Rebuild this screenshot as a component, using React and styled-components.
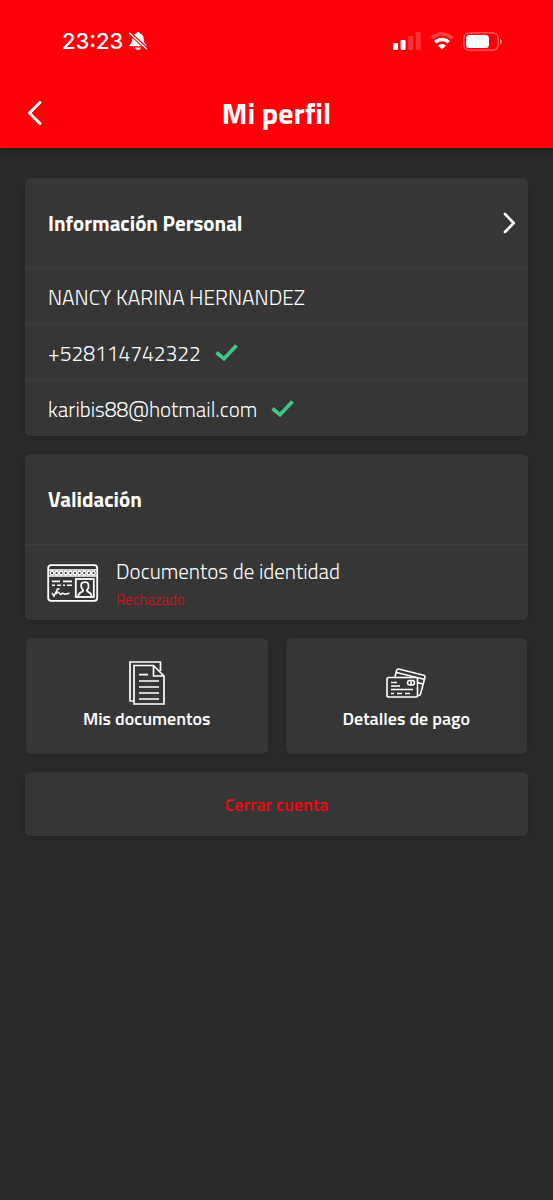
import React from 'react'
import styled, { createGlobalStyle } from 'styled-components'

const contactRows = [
  { id: 'name', text: 'NANCY KARINA HERNANDEZ', verified: false },
  { id: 'phone', text: '+528114742322', verified: true },
  { id: 'email', text: 'karibis88@hotmail.com', verified: true },
]

const BellOffIcon = () => (
  <svg width="20" height="20" viewBox="0 0 20 20" aria-hidden="true">
    <path fill="#fff" d="M10 1c1 0 1.700.6 1.900 1.500 2.400.8 3.700 2.700 3.800 5.300.1 3 .8 4.300 2.500 6 .6.700.3 1.400-.6 1.400H2.400c-.9 0-1.200-.7-.6-1.400 1.700-1.700 2.400-3 2.500-6 .1-2.600 1.400-4.500 3.800-5.300C8.300 1.600 9 1 10 1z" />
    <path fill="#fff" d="M7.200 16.500h5.600c-.2 1.600-1.300 2.500-2.800 2.500s-2.600-.9-2.800-2.500z" />
    <path stroke="#ff0008" strokeWidth="3.600" d="M1 1.500L19 18" />
    <path stroke="#fff" strokeWidth="1.400" strokeLinecap="round" d="M1.500 2L18.500 17.800" />
  </svg>
)

const SignalIcon = () => (
  <svg width="28" height="18" viewBox="0 0 28 18" fill="#fff" aria-hidden="true">
    <rect x="0" y="11" width="5" height="7" rx="1.300" />
    <rect x="7.600" y="8" width="5" height="10" rx="1.300" />
    <rect x="15.200" y="4" width="5" height="14" rx="1.300" opacity=".2" />
    <rect x="22.800" y="0" width="5" height="18" rx="1.300" opacity=".2" />
  </svg>
)

const WifiIcon = () => (
  <svg width="24" height="18" viewBox="0 0 24 18" fill="none" stroke="#fff" strokeWidth="3.400" aria-hidden="true">
    <path opacity=".25" d="M1.500 6.200C7.500.5 16.500.5 22.500 6.200" />
    <path d="M5.300 10.300C9.200 6.600 14.800 6.600 18.700 10.300" />
    <path fill="#fff" stroke="none" d="M12 17.500l-3.900-3.900c2.300-2 5.500-2 7.800 0z" />
  </svg>
)

const BatteryIcon = () => (
  <svg width="40" height="19" viewBox="0 0 40 19" aria-hidden="true">
    <rect x=".8" y=".8" width="34.500" height="17.400" rx="5.500" fill="none" stroke="#fff" strokeWidth="1.300" opacity=".4" />
    <rect x="3" y="3" width="23" height="13" rx="3.500" fill="#fff" />
    <path fill="#fff" opacity=".5" d="M37 6.500c2.300.8 2.300 5.200 0 6z" />
  </svg>
)

const BackIcon = () => (
  <svg width="16" height="26" viewBox="0 0 16 26" fill="none" stroke="#fff" strokeWidth="3" strokeLinecap="round" strokeLinejoin="round" aria-hidden="true">
    <path d="M13 2.500L2.500 13 13 23.500" />
  </svg>
)

const ForwardIcon = () => (
  <svg width="14" height="22" viewBox="0 0 14 22" fill="none" stroke="#fff" strokeWidth="2.700" strokeLinecap="round" strokeLinejoin="round" aria-hidden="true">
    <path d="M3 2l8.700 9L3 20" />
  </svg>
)

const CheckIcon = () => (
  <svg width="23" height="18" viewBox="0 0 23 18" fill="none" stroke="#41c983" strokeWidth="3.600" role="img" aria-label="Verificado">
    <path d="M1.500 8.500L9 14.800 21.500 1.500" />
  </svg>
)

const IdCardIcon = () => (
  <svg width="52" height="38" viewBox="0 0 52 38" fill="none" stroke="#fff" strokeWidth="1.800" aria-hidden="true">
    <rect x="1.200" y="1.200" width="49" height="35.600" rx="3" />
    <path d="M1.200 6h49M1.200 12h49" strokeWidth="1.300" />
    {[5, 9.600, 14.200, 18.800, 23.400, 28, 32.600, 37.200, 41.800, 46.400].map(cx => (
      <ellipse key={cx} cx={cx} cy="9" rx="1.800" ry="1.800" strokeWidth="1.400" />
    ))}
    <path d="M5 17.300h8M16 17.300h9" />
    <path d="M5 21.300h3M10 21.300h4M16 21.300h2M20 21.300h5" strokeWidth="1.600" />
    <path d="M5 29l2 3 3.500-7h2M9 30c2-3 3-2 4 0s2-2 3.500-.5 2.500.5 6-.3" strokeWidth="1.500" />
    <rect x="28.800" y="15" width="18" height="18" />
    <path d="M31 32.500c.4-2.600 1.500-3.700 3-4.200 1.700-.5 2.200-1 2.200-2-3-2.600-2.700-8 .3-8 3.500-1 5.800 1 5 5-.2 1.500-1 2.200-1.700 3 0 1 .8 1.500 2.200 2 1.500.6 2.300 1.900 2.700 4.200" strokeWidth="1.800" />
  </svg>
)

const DocumentsIcon = () => (
  <svg width="36" height="44" viewBox="0 0 36 44" fill="none" stroke="#fff" strokeWidth="1.700" aria-hidden="true">
    <path d="M4.500 40H1V1h30.500v9" />
    <path d="M5 4.500h19.500L35 15v28H5zM24.500 4.500V15H35" />
    <path d="M10 13.700h9M10 20h20M10 26h20M10 32h20M10 38h20" />
  </svg>
)

const CardsIcon = () => (
  <svg width="40" height="30" viewBox="0 0 40 30" fill="none" stroke="#fff" strokeWidth="1.600" strokeLinejoin="round" aria-hidden="true">
    <rect x="1" y="9.500" width="30.500" height="19.500" rx="1.800" />
    <path d="M9 9l1.700-7q.5-1.300 2-1L37.700 7.300q1.600.5 1.300 2L34.500 26q-.5 2-3 1.800M10.500 4.500L38 11.300M31.500 14.500l5.200 1.500" />
    <path d="M5 14.500h6M5 18h9M5 21.500h22M5 25.500h3M11 25.500h5M19 25.500h5" />
    <rect x="21.500" y="12.500" width="7" height="4.500" rx="2.200" />
    <path d="M25 12.500V17" />
  </svg>
)

const App = () => {
  return (
    <>
      <GlobalStyle />
      <Header>
        <StatusBar>
          <Clock>
            23:23
            <BellOffIcon />
          </Clock>
          <StatusIcons>
            <SignalIcon />
            <WifiIcon />
            <BatteryIcon />
          </StatusIcons>
        </StatusBar>
        <TitleBar>
          <BackButton type="button" aria-label="Volver">
            <BackIcon />
          </BackButton>
          <Title>Mi perfil</Title>
        </TitleBar>
      </Header>

      <Content>
        <Card>
          <CardHeader>
            <CardTitle>Información Personal</CardTitle>
            <ForwardButton type="button" aria-label="Editar información personal">
              <ForwardIcon />
            </ForwardButton>
          </CardHeader>
          {contactRows.map(row => (
            <InfoRow key={row.id}>
              {row.text}
              {row.verified && <CheckIcon />}
            </InfoRow>
          ))}
        </Card>

        <Card>
          <CardHeader>
            <CardTitle>Validación</CardTitle>
          </CardHeader>
          <DocumentRow type="button">
            <IdCardIcon />
            <DocumentText>
              <DocumentName>Documentos de identidad</DocumentName>
              <DocumentStatus>Rechazado</DocumentStatus>
            </DocumentText>
          </DocumentRow>
        </Card>

        <Tiles>
          <Tile type="button">
            <TileIcon>
              <DocumentsIcon />
            </TileIcon>
            Mis documentos
          </Tile>
          <Tile type="button">
            <TileIcon>
              <CardsIcon />
            </TileIcon>
            Detalles de pago
          </Tile>
        </Tiles>

        <CloseButton type="button">Cerrar cuenta</CloseButton>
      </Content>
    </>
  )
}

export default App

const GlobalStyle = createGlobalStyle`
    * {
        box-sizing: border-box;
    }

    body {
        margin: 0;
        background-color: #2b2b2b;
        color: #fff;
        font-family: "Titillium Web", Roboto, "Open Sans", sans-serif;
    }

    button {
        border: none;
        padding: 0;
        color: inherit;
        font-family: inherit;
        cursor: pointer;
    }

    svg {
        flex-shrink: 0;
    }
`

const Header = styled.header`
    background-color: #ff0008;
    box-shadow: 0 2px 6px rgba(0, 0, 0, 0.4);
`

const StatusBar = styled.div`
    display: flex;
    align-items: center;
    justify-content: space-between;
    height: 82px;
    padding: 0 50px 0 62px;
`

const Clock = styled.div`
    display: flex;
    align-items: center;
    gap: 5px;
    font-family: Inter, sans-serif;
    font-size: 22px;
    font-weight: 500;
`

const StatusIcons = styled.div`
    display: flex;
    align-items: center;
    gap: 9px;
`

const TitleBar = styled.div`
    display: grid;
    grid-template-columns: 28px 1fr 28px;
    align-items: center;
    height: 66px;
    padding: 0 21px 4px;
`

const BackButton = styled.button`
    display: flex;
    justify-content: center;
    background: none;
`

const Title = styled.h1`
    margin: 0;
    font-size: 30px;
    font-weight: 700;
    line-height: 40px;
    text-align: center;
`

const Content = styled.main`
    display: flex;
    flex-direction: column;
    gap: 18px;
    padding: 30px 25px;
`

const Card = styled.section`
    border-radius: 6px;
    background-color: #363636;
    box-shadow: 0 2px 8px rgba(0, 0, 0, 0.15);
`

const CardHeader = styled.div`
    display: flex;
    align-items: center;
    justify-content: space-between;
    height: 90px;
    padding: 0 12px 0 23px;
`

const CardTitle = styled.h2`
    margin: 0;
    font-size: 21px;
    font-weight: 700;
`

const ForwardButton = styled.button`
    display: flex;
    background: none;
`

const InfoRow = styled.div`
    display: flex;
    align-items: center;
    gap: 14px;
    height: 56px;
    padding: 0 23px;
    border-top: 1px solid #3d3d3d;
    font-size: 21px;
    font-weight: 300;
`

const DocumentRow = styled.button`
    display: flex;
    align-items: center;
    gap: 17px;
    width: 100%;
    height: 76px;
    padding: 0 22px;
    border-top: 1px solid #3d3d3d;
    background: none;
    text-align: left;
`

const DocumentText = styled.span`
    display: flex;
    flex-direction: column;
    gap: 5px;
    padding-top: 2px;
    font-weight: 300;
`

const DocumentName = styled.span`
    font-size: 21px;
    line-height: 27px;
`

const DocumentStatus = styled.span`
    color: #e30b14;
    font-size: 15px;
    line-height: 20px;
`

const Tiles = styled.div`
    display: grid;
    grid-template-columns: 1fr 1fr;
    gap: 18px;
    padding: 0 1px;
`

const Tile = styled.button`
    display: flex;
    flex-direction: column;
    align-items: center;
    justify-content: center;
    gap: 3px;
    height: 116px;
    padding-bottom: 2px;
    border-radius: 6px;
    background-color: #363636;
    box-shadow: 0 2px 8px rgba(0, 0, 0, 0.15);
    font-size: 18px;
    font-weight: 600;
    line-height: 22px;
`

const TileIcon = styled.span`
    display: flex;
    align-items: center;
    height: 44px;
`

const CloseButton = styled.button`
    height: 64px;
    border-radius: 6px;
    background-color: #363636;
    box-shadow: 0 2px 8px rgba(0, 0, 0, 0.15);
    font-size: 18px;
    font-weight: 600;

    && {
        color: #f00810;
    }
`
